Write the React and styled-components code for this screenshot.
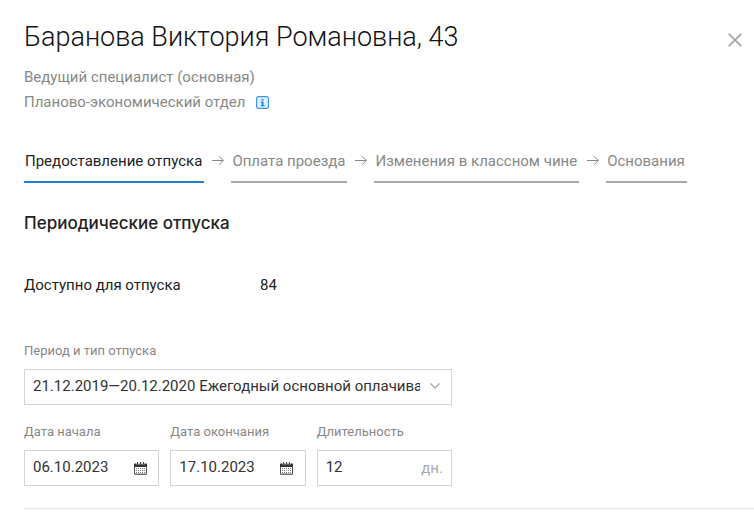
import React from "react";
import styled, { createGlobalStyle } from "styled-components";

const GlobalStyle = createGlobalStyle`
  *, *::before, *::after { box-sizing: border-box; }
  body { margin: 0; background: #fff; color: #222; font: 15px/24px Roboto, "Open Sans", sans-serif; }
  h1, h2, p, dl, dt, dd, ol { margin: 0; padding: 0; font-weight: 400; }
  button, input, select { font: inherit; color: inherit; }
`;

const Page = styled.main`
  padding: 16px 0 0 24px;
`;

const Header = styled.header`
  display: flex;
  justify-content: space-between;
  align-items: flex-start;
  padding-right: 9px;
`;

const Title = styled.h1`
  font-size: 27px;
  line-height: 42px;
  font-weight: 300;
  color: #111;
  margin-bottom: 7px;
`;

const Subtitle = styled.p`
  display: flex;
  align-items: center;
  gap: 11px;
  line-height: 25px;
  color: #888;
`;

const IconButton = styled.button`
  display: flex;
  align-items: center;
  justify-content: center;
  flex: none;
  width: ${(p) => p.$size}px;
  height: ${(p) => p.$size}px;
  padding: 0;
  border: 0;
  background: none;
  cursor: pointer;
`;

const CloseButton = styled(IconButton)`
  margin-top: 14px;
`;

const Steps = styled.ol`
  display: flex;
  margin-top: 34px;
  list-style: none;
`;

const Step = styled.li`
  display: flex;
  align-items: flex-start;
`;

const StepLink = styled.a`
  display: block;
  padding: 0 2px 8px 1px;
  white-space: nowrap;
  text-decoration: none;
  color: ${(p) => (p.$active ? "#222" : "#888")};
  border-bottom: 2px solid ${(p) => (p.$active ? "#1f7fd0" : "#aaa")};
`;

const ArrowIcon = styled.svg`
  margin: 6px 7px 0 8px;
`;

const SectionTitle = styled.h2`
  margin-top: 28px;
  font-family: Inter, Roboto, sans-serif;
  font-size: 17px;
  line-height: 24px;
  font-weight: 500;
`;

const Facts = styled.dl`
  display: grid;
  grid-template-columns: 236px 1fr;
  margin-top: 38px;
`;

const Form = styled.form`
  display: grid;
  grid-template-columns: repeat(3, 1fr);
  gap: 17px 11px;
  max-width: 428px;
  margin-top: 44px;
  margin-bottom: 22px;
`;

const Field = styled.div`
  grid-column: ${(p) => (p.$wide ? "1 / -1" : "auto")};
  min-width: 0;
`;

const Label = styled.label`
  display: block;
  margin-bottom: 8px;
  font-size: 13px;
  line-height: 20px;
  color: #888;
`;

const Box = styled.div`
  display: flex;
  align-items: center;
  height: 36px;
  padding: 0 8px;
  border: 1px solid #d4d4d4;
  color: #333;
`;

const Input = styled.input`
  flex: 1;
  min-width: 0;
  padding: 0 0 2px;
  border: 0;
  outline: 0;
  background: none;
`;

const Select = styled.select`
  flex: 1;
  min-width: 0;
  padding: 0 0 2px;
  margin-right: 5px;
  border: 0;
  outline: 0;
  background: none;
  appearance: none;
  overflow: hidden;
`;

const Unit = styled.span`
  color: #aaa;
`;

const Divider = styled.hr`
  margin: 0;
  border: 0;
  border-top: 1px solid #e6e6e6;
`;

const Arrow = () => (
  <ArrowIcon width="12" height="11" viewBox="0 0 12 11" fill="none" stroke="#888" aria-hidden="true">
    <path d="M0 5.5H11M7 1.2 11.3 5.5 7 9.8" />
  </ArrowIcon>
);

const InfoIcon = () => (
  <svg width="13" height="13" viewBox="0 0 13 13" aria-hidden="true">
    <rect x=".6" y=".6" width="11.8" height="11.8" rx="1.8" fill="#e4f1ff" stroke="#3d96f0" strokeWidth="1.2" />
    <path d="M5.5 3h2v1.6h-2zM4.8 5.6h2.7v3.5h1v1.1H4.7V9.1h1V6.7h-.9z" fill="#1f7fe0" />
  </svg>
);

const CalendarIcon = () => (
  <svg width="13" height="13" viewBox="0 0 13 13" aria-hidden="true">
    <path d="M.5 2h12v10a.6.6 0 0 1-.6.6H1.1a.6.6 0 0 1-.6-.6z" fill="#fff" stroke="#555" />
    <path d="M0 1.8h13v3.2H0z" fill="#333" />
    <path d="M3.5 0v2.6M6.5 0v2.6M9.5 0v2.6" stroke="#fff" strokeWidth="2" />
    <path d="M3.5 0v2.6M6.5 0v2.6M9.5 0v2.6" stroke="#444" />
    <path d="M2 6.5h9M2 8.5h9M2 10.5h9" stroke="#777" strokeDasharray="1 1" />
    <path d="M1 12h11" stroke="#777" />
  </svg>
);

const ChevronIcon = () => (
  <svg width="18" height="12" viewBox="0 0 18 12" fill="none" stroke="#aaa" strokeWidth="1.5" aria-hidden="true">
    <path d="M5.5 2.5 10 7l4.5-4.5" />
  </svg>
);

const steps = ["Предоставление отпуска", "Оплата проезда", "Изменения в классном чине", "Основания"];

function DateField({ id, label, value }) {
  return (
    <Field>
      <Label htmlFor={id}>{label}</Label>
      <Box>
        <Input id={id} defaultValue={value} />
        <IconButton type="button" $size={20} aria-label={`Календарь: ${label}`}>
          <CalendarIcon />
        </IconButton>
      </Box>
    </Field>
  );
}

export default function App() {
  return (
    <>
      <GlobalStyle />
      <Page>
        <Header>
          <div>
            <Title>Баранова Виктория Романовна, 43</Title>
            <Subtitle>Ведущий специалист (основная)</Subtitle>
            <Subtitle>
              Планово-экономический отдел
              <IconButton type="button" $size={13} aria-label="Информация об отделе">
                <InfoIcon />
              </IconButton>
            </Subtitle>
          </div>
          <CloseButton type="button" $size={20} aria-label="Закрыть">
            <svg width="14" height="14" viewBox="0 0 14 14" stroke="#999" strokeWidth="1.5" aria-hidden="true">
              <path d="M.7.7 13.3 13.3M13.3.7.7 13.3" />
            </svg>
          </CloseButton>
        </Header>

        <nav aria-label="Этапы">
          <Steps>
            {steps.map((name, i) => (
              <Step key={name}>
                {i > 0 && <Arrow />}
                <StepLink href="#" $active={i === 0}>{name}</StepLink>
              </Step>
            ))}
          </Steps>
        </nav>

        <SectionTitle>Периодические отпуска</SectionTitle>
        <Facts>
          <dt>Доступно для отпуска</dt>
          <dd>84</dd>
        </Facts>

        <Form>
          <Field $wide>
            <Label htmlFor="period">Период и тип отпуска</Label>
            <Box>
              <Select id="period">
                <option>21.12.2019—20.12.2020 Ежегодный основной оплачиваемый отпуск</option>
              </Select>
              <ChevronIcon />
            </Box>
          </Field>
          <DateField id="start" label="Дата начала" value="06.10.2023" />
          <DateField id="end" label="Дата окончания" value="17.10.2023" />
          <Field>
            <Label htmlFor="days">Длительность</Label>
            <Box>
              <Input id="days" defaultValue="12" />
              <Unit>дн.</Unit>
            </Box>
          </Field>
        </Form>
        <Divider />
      </Page>
    </>
  );
}
